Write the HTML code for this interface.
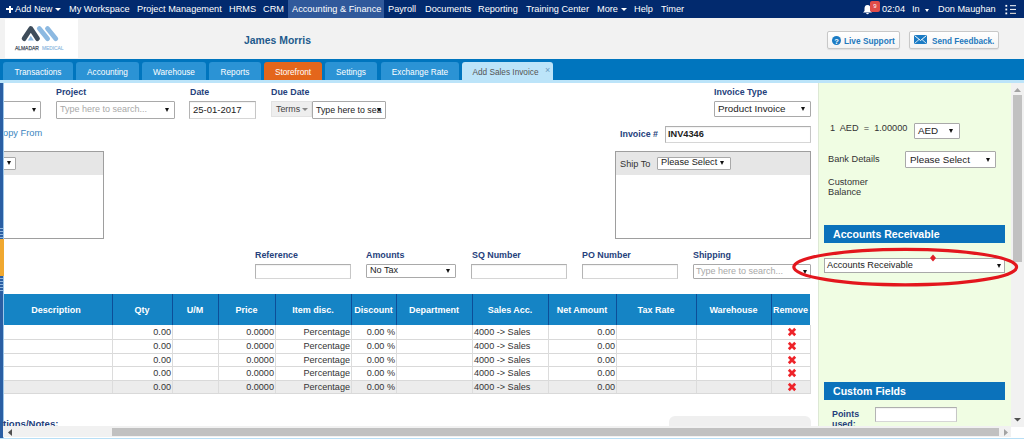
<!DOCTYPE html>
<html><head><meta charset="utf-8">
<style>
*{box-sizing:border-box;margin:0;padding:0}
html,body{width:1024px;height:439px;overflow:hidden;background:#fff;font-family:"Liberation Sans",sans-serif;font-size:9.2px;color:#222;position:relative}
.a{position:absolute;white-space:nowrap}
#nav{position:absolute;left:0;top:0;width:1024px;height:18px;background:#022a6e;color:#fff;font-size:9.2px}
#nav .t{position:absolute;top:4px;line-height:11px;white-space:nowrap}
#hdr{position:absolute;left:0;top:18px;width:1024px;height:41px;background:#f2f2f2}
#logo{position:absolute;left:5px;top:1px;width:73px;height:39px;background:#fff}
#tabbar{position:absolute;left:0;top:59px;width:1024px;height:24px;background:#0075be}
.tab{position:absolute;top:3px;height:18px;background:#2b93d5;color:#fff;font-size:8.25px;text-align:center;line-height:18px;padding-top:1.5px;border-radius:3px 3px 0 0}
#tabline{position:absolute;left:0;top:80px;width:1024px;height:3px;background:#bce4f9}
.lbl{position:absolute;font-weight:bold;color:#253f7c;font-size:8.9px;white-space:nowrap;line-height:10px;margin-top:-1px}
.inp{position:absolute;background:#fff;border:1px solid;border-color:#aeaeae #c6c6c6 #d6d6d6 #b4b4b4;box-shadow:inset 0 1px 1px rgba(0,0,0,.05)}
.sel{position:absolute;background:#fff;border:1px solid #a9a9a9;border-radius:1px;font-size:9.5px;color:#222;white-space:nowrap;overflow:hidden}
.tri{position:absolute;width:0;height:0;margin-left:-0.3px;border-top:4.3px solid #111;border-left:2.9px solid transparent;border-right:2.9px solid transparent}
.ph{color:#a8a8a8;font-size:9px}
#green{position:absolute;left:818px;top:83px;width:193px;height:344px;background:#f0fde3;border-left:1px solid #dde8d5}
.gh{position:absolute;background:#0b72bb;color:#fff;font-weight:bold;font-size:10.6px;line-height:18px;white-space:nowrap}
.gt{position:absolute;font-size:9.2px;color:#333;white-space:nowrap;line-height:10px}
.th{position:absolute;top:305px;color:#fff;font-weight:bold;font-size:9px;text-align:center;line-height:10px;white-space:nowrap}
.td{position:absolute;color:#333;font-size:9.1px;line-height:10px;white-space:nowrap}
</style></head><body>
<div id="nav">
  <span class="a" style="left:6px;top:8px;width:7px;height:2px;background:#fff"></span><span class="a" style="left:8.5px;top:5.5px;width:2px;height:7px;background:#fff"></span>
  <span class="t" style="left:15px">Add New</span>
  <span class="a" style="left:55px;top:8px;width:0;height:0;border-top:3px solid #fff;border-left:3px solid transparent;border-right:3px solid transparent"></span>
  <span class="t" style="left:69px">My Workspace</span>
  <span class="t" style="left:137px">Project Management</span>
  <span class="t" style="left:229px">HRMS</span>
  <span class="t" style="left:263px">CRM</span>
  <div class="a" style="left:288px;top:0;width:96px;height:18px;background:#30599b"></div>
  <span class="t" style="left:292px">Accounting &amp; Finance</span>
  <span class="t" style="left:388px">Payroll</span>
  <span class="t" style="left:425px">Documents</span>
  <span class="t" style="left:478px">Reporting</span>
  <span class="t" style="left:526px">Training Center</span>
  <span class="t" style="left:597px">More</span>
  <span class="a" style="left:621px;top:8px;width:0;height:0;border-top:3px solid #fff;border-left:3px solid transparent;border-right:3px solid transparent"></span>
  <span class="t" style="left:634px">Help</span>
  <span class="t" style="left:661px">Timer</span>
  <span class="t" style="left:882px">02:04</span>
  <span class="t" style="left:912px">In</span>
  <span class="a" style="left:925px;top:9px;width:0;height:0;border-top:3px solid #fff;border-left:2.5px solid transparent;border-right:2.5px solid transparent"></span>
  <span class="t" style="left:938px">Don Maughan</span>
</div>
<div id="hdr">
  <div id="logo"></div>
  <div class="a" style="left:244px;top:17px;font-size:10.4px;font-weight:bold;color:#1e5a8c;line-height:12px">James Morris</div>
  <div class="a" style="left:827px;top:13px;width:73px;height:18px;background:linear-gradient(#fff,#f3f3f3);border:1px solid #c8c8c8;border-radius:2px;box-shadow:0 1px 1px rgba(0,0,0,.08)"></div>
  <div class="a" style="left:909px;top:13px;width:90px;height:18px;background:linear-gradient(#fff,#f3f3f3);border:1px solid #c8c8c8;border-radius:2px;box-shadow:0 1px 1px rgba(0,0,0,.08)"></div>
  <div class="a" style="left:844px;top:18px;font-size:8.3px;font-weight:bold;color:#2479bd;line-height:11px">Live Support</div>
  <div class="a" style="left:932px;top:18px;font-size:8.2px;font-weight:bold;color:#2479bd;line-height:11px">Send Feedback.</div>
</div>
<div id="tabbar">
  <div class="tab" style="left:3px;width:70px">Transactions</div>
  <div class="tab" style="left:76px;width:63px">Accounting</div>
  <div class="tab" style="left:142px;width:64px">Warehouse</div>
  <div class="tab" style="left:209px;width:52px">Reports</div>
  <div class="tab" style="left:264px;width:58px;background:#e4661b">Storefront</div>
  <div class="tab" style="left:325px;width:52px">Settings</div>
  <div class="tab" style="left:381px;width:78px">Exchange Rate</div>
  <div class="tab" style="left:462px;width:91px;background:#bce4f9;color:#555;height:21px;padding-right:4px">Add Sales Invoice</div>
</div>
<div id="tabline"></div>


<!-- top form row -->
<div class="sel" style="left:0;top:101px;width:41px;height:18px"></div>
<div class="lbl" style="left:56px;top:88px">Project</div>
<div class="sel" style="left:56px;top:101px;width:119px;height:18px"><span class="ph" style="position:absolute;left:3px;top:1.5px">Type here to search...</span></div>
<div class="lbl" style="left:190px;top:88px">Date</div>
<div class="inp" style="left:189px;top:101px;width:67px;height:18px"><span style="position:absolute;left:3px;top:1.5px;font-size:9.5px">25-01-2017</span></div>
<div class="lbl" style="left:271px;top:88px">Due Date</div>
<div class="a" style="left:271px;top:101px;width:41px;height:16px;background:#eee;border:1px solid #e2e2e2;color:#444;font-size:8.9px;line-height:14px;padding-left:4px">Terms</div>
<div class="sel" style="left:312px;top:101px;width:74px;height:17.5px"><span style="position:absolute;left:3px;top:2.5px;font-size:8.8px">Type here to sea</span></div>
<div class="lbl" style="left:714px;top:88px">Invoice Type</div>
<div class="sel" style="left:714px;top:101px;width:97px;height:16px"><span style="position:absolute;left:3px;top:1px;font-size:9.8px">Product Invoice</span></div>
<div class="a" style="left:3px;top:128px;color:#3a85c0;font-size:9.3px">opy From</div>
<div class="lbl" style="left:620px;top:129.5px">Invoice #</div>
<div class="inp" style="left:665px;top:126px;width:146px;height:17px"><span style="position:absolute;left:2px;top:2px;font-weight:bold;font-size:9.2px;color:#222">INV4346</span></div>

<!-- boxes -->
<div class="a" style="left:-2px;top:151px;width:106px;height:88px;border:1px solid #9e9e9e;background:#fff">
  <div style="position:absolute;left:0;top:0;width:104px;height:23px;background:#e6e6e6"></div>
  <div class="sel" style="left:0;top:5px;width:17px;height:13px"></div>
</div>
<div class="a" style="left:615px;top:151px;width:196px;height:88px;border:1px solid #9e9e9e;background:#fff">
  <div style="position:absolute;left:0;top:0;width:194px;height:23px;background:#e6e6e6"></div>
  <div class="gt" style="left:4px;top:7px">Ship To</div>
  <div class="sel" style="left:41px;top:4.5px;width:74px;height:13.5px"><span style="position:absolute;left:3px;top:-0.5px;font-size:9.2px">Please Select</span></div>
</div>

<!-- second row -->
<div class="lbl" style="left:255px;top:251px">Reference</div>
<div class="inp" style="left:255px;top:264px;width:96px;height:15px"></div>
<div class="lbl" style="left:366px;top:251px">Amounts</div>
<div class="sel" style="left:366px;top:264px;width:90px;height:14px"><span style="position:absolute;left:3px;top:0px;font-size:9.1px">No Tax</span></div>
<div class="lbl" style="left:472px;top:251px">SQ Number</div>
<div class="inp" style="left:471px;top:264px;width:96px;height:15px"></div>
<div class="lbl" style="left:582px;top:251px">PO Number</div>
<div class="inp" style="left:582px;top:264px;width:96px;height:15px"></div>
<div class="lbl" style="left:693px;top:251px">Shipping</div>
<div class="sel" style="left:693px;top:264px;width:118px;height:15px"><span class="ph" style="position:absolute;left:2px;top:0.5px">Type here to search...</span></div>

<!-- table -->
<div id="tbl">
<div class="a" style="left:0;top:294px;width:810px;height:31px;background:#1584c5"></div>
<div class="a" style="left:112px;top:294px;width:1px;height:31px;background:#0d4e98"></div>
<div class="a" style="left:172px;top:294px;width:1px;height:31px;background:#0d4e98"></div>
<div class="a" style="left:218px;top:294px;width:1px;height:31px;background:#0d4e98"></div>
<div class="a" style="left:275px;top:294px;width:1px;height:31px;background:#0d4e98"></div>
<div class="a" style="left:351px;top:294px;width:1px;height:31px;background:#0d4e98"></div>
<div class="a" style="left:396px;top:294px;width:1px;height:31px;background:#0d4e98"></div>
<div class="a" style="left:472px;top:294px;width:1px;height:31px;background:#0d4e98"></div>
<div class="a" style="left:548px;top:294px;width:1px;height:31px;background:#0d4e98"></div>
<div class="a" style="left:616px;top:294px;width:1px;height:31px;background:#0d4e98"></div>
<div class="a" style="left:696px;top:294px;width:1px;height:31px;background:#0d4e98"></div>
<div class="a" style="left:771px;top:294px;width:1px;height:31px;background:#0d4e98"></div>
<div class="th" style="left:0px;width:112px">Description</div>
<div class="th" style="left:112px;width:60px">Qty</div>
<div class="th" style="left:172px;width:46px">U/M</div>
<div class="th" style="left:218px;width:57px">Price</div>
<div class="th" style="left:275px;width:76px">Item disc.</div>
<div class="th" style="left:351px;width:45px">Discount</div>
<div class="th" style="left:396px;width:76px">Department</div>
<div class="th" style="left:472px;width:76px">Sales Acc.</div>
<div class="th" style="left:548px;width:68px">Net Amount</div>
<div class="th" style="left:616px;width:80px">Tax Rate</div>
<div class="th" style="left:696px;width:75px">Warehouse</div>
<div class="th" style="left:771px;width:39px">Remove</div>
<div class="a" style="left:0;top:380px;width:810px;height:13px;background:#ececec"></div>
<div class="a" style="left:0;top:339px;width:811px;height:1px;background:#d9d9d9"></div>
<div class="a" style="left:0;top:353px;width:811px;height:1px;background:#d9d9d9"></div>
<div class="a" style="left:0;top:366px;width:811px;height:1px;background:#d9d9d9"></div>
<div class="a" style="left:0;top:380px;width:811px;height:1px;background:#d9d9d9"></div>
<div class="a" style="left:0;top:393px;width:811px;height:1px;background:#d9d9d9"></div>
<div class="a" style="left:112px;top:325px;width:1px;height:68px;background:#dcdcdc"></div>
<div class="a" style="left:172px;top:325px;width:1px;height:68px;background:#dcdcdc"></div>
<div class="a" style="left:218px;top:325px;width:1px;height:68px;background:#dcdcdc"></div>
<div class="a" style="left:275px;top:325px;width:1px;height:68px;background:#dcdcdc"></div>
<div class="a" style="left:351px;top:325px;width:1px;height:68px;background:#dcdcdc"></div>
<div class="a" style="left:396px;top:325px;width:1px;height:68px;background:#dcdcdc"></div>
<div class="a" style="left:472px;top:325px;width:1px;height:68px;background:#dcdcdc"></div>
<div class="a" style="left:548px;top:325px;width:1px;height:68px;background:#dcdcdc"></div>
<div class="a" style="left:616px;top:325px;width:1px;height:68px;background:#dcdcdc"></div>
<div class="a" style="left:696px;top:325px;width:1px;height:68px;background:#dcdcdc"></div>
<div class="a" style="left:771px;top:325px;width:1px;height:68px;background:#dcdcdc"></div>
<div class="a" style="left:810px;top:325px;width:1px;height:68px;background:#dcdcdc"></div>
<div class="td" style="left:91px;top:327px;width:80px;text-align:right">0.00</div>
<div class="td" style="left:194px;top:327px;width:80px;text-align:right">0.0000</div>
<div class="td" style="left:270px;top:327px;width:80px;text-align:right">Percentage</div>
<div class="td" style="left:315px;top:327px;width:80px;text-align:right">0.00 %</div>
<div class="td" style="left:535px;top:327px;width:80px;text-align:right">0.00</div>
<div class="td" style="left:474px;top:327px">4000 -&gt; Sales</div>
<svg class="a" style="left:786.5px;top:326.5px" width="10" height="10" viewBox="0 0 10 10"><path d="M1.8 1.8L8.2 8.2M8.2 1.8L1.8 8.2" stroke="#ee2329" stroke-width="2.7"/></svg>
<div class="td" style="left:91px;top:341px;width:80px;text-align:right">0.00</div>
<div class="td" style="left:194px;top:341px;width:80px;text-align:right">0.0000</div>
<div class="td" style="left:270px;top:341px;width:80px;text-align:right">Percentage</div>
<div class="td" style="left:315px;top:341px;width:80px;text-align:right">0.00 %</div>
<div class="td" style="left:535px;top:341px;width:80px;text-align:right">0.00</div>
<div class="td" style="left:474px;top:341px">4000 -&gt; Sales</div>
<svg class="a" style="left:786.5px;top:340.5px" width="10" height="10" viewBox="0 0 10 10"><path d="M1.8 1.8L8.2 8.2M8.2 1.8L1.8 8.2" stroke="#ee2329" stroke-width="2.7"/></svg>
<div class="td" style="left:91px;top:355px;width:80px;text-align:right">0.00</div>
<div class="td" style="left:194px;top:355px;width:80px;text-align:right">0.0000</div>
<div class="td" style="left:270px;top:355px;width:80px;text-align:right">Percentage</div>
<div class="td" style="left:315px;top:355px;width:80px;text-align:right">0.00 %</div>
<div class="td" style="left:535px;top:355px;width:80px;text-align:right">0.00</div>
<div class="td" style="left:474px;top:355px">4000 -&gt; Sales</div>
<svg class="a" style="left:786.5px;top:354.5px" width="10" height="10" viewBox="0 0 10 10"><path d="M1.8 1.8L8.2 8.2M8.2 1.8L1.8 8.2" stroke="#ee2329" stroke-width="2.7"/></svg>
<div class="td" style="left:91px;top:368px;width:80px;text-align:right">0.00</div>
<div class="td" style="left:194px;top:368px;width:80px;text-align:right">0.0000</div>
<div class="td" style="left:270px;top:368px;width:80px;text-align:right">Percentage</div>
<div class="td" style="left:315px;top:368px;width:80px;text-align:right">0.00 %</div>
<div class="td" style="left:535px;top:368px;width:80px;text-align:right">0.00</div>
<div class="td" style="left:474px;top:368px">4000 -&gt; Sales</div>
<svg class="a" style="left:786.5px;top:367.5px" width="10" height="10" viewBox="0 0 10 10"><path d="M1.8 1.8L8.2 8.2M8.2 1.8L1.8 8.2" stroke="#ee2329" stroke-width="2.7"/></svg>
<div class="td" style="left:91px;top:382px;width:80px;text-align:right">0.00</div>
<div class="td" style="left:194px;top:382px;width:80px;text-align:right">0.0000</div>
<div class="td" style="left:270px;top:382px;width:80px;text-align:right">Percentage</div>
<div class="td" style="left:315px;top:382px;width:80px;text-align:right">0.00 %</div>
<div class="td" style="left:535px;top:382px;width:80px;text-align:right">0.00</div>
<div class="td" style="left:474px;top:382px">4000 -&gt; Sales</div>
<svg class="a" style="left:786.5px;top:381.5px" width="10" height="10" viewBox="0 0 10 10"><path d="M1.8 1.8L8.2 8.2M8.2 1.8L1.8 8.2" stroke="#ee2329" stroke-width="2.7"/></svg>

</div>

<!-- green panel -->
<div id="green"></div>
<div class="gt" style="left:830px;top:123px">1&nbsp; AED&nbsp; =&nbsp; 1.00000</div>
<div class="sel" style="left:914px;top:123px;width:46px;height:16px"><span style="position:absolute;left:3px;top:0.5px;font-size:9.8px">AED</span></div>
<div class="gt" style="left:828px;top:154px">Bank Details</div>
<div class="sel" style="left:905px;top:151px;width:91px;height:17px"><span style="position:absolute;left:4px;top:1.5px;font-size:9.8px">Please Select</span></div>
<div class="gt" style="left:828px;top:177px">Customer</div>
<div class="gt" style="left:828px;top:187px">Balance</div>
<div class="gh" style="left:824px;top:225px;width:181px;padding-left:9px">Accounts Receivable</div>
<div class="sel" style="left:824px;top:258px;width:181px;height:15px;border-radius:0"><span style="position:absolute;left:2px;top:1px;font-size:9.2px">Accounts Receivable</span></div>
<div class="gh" style="left:824px;top:382px;width:181px;padding-left:9px">Custom Fields</div>
<div class="lbl" style="left:832px;top:409.5px">Points</div>
<div class="lbl" style="left:832px;top:420px">used:</div>
<div class="inp" style="left:875px;top:407px;width:82px;height:15px"></div>


<!-- left bar -->
<div class="a" style="left:0;top:83px;width:3px;height:356px;background:#2a5ea3"></div>
<div class="a" style="left:3px;top:83px;width:1px;height:356px;background:#9cc7ea"></div>
<div class="a" style="left:0;top:226px;width:3px;height:13px;background:repeating-linear-gradient(#2a5ea3 0 2px,#8fb4dc 2px 3px)"></div>
<div class="a" style="left:0;top:239px;width:4px;height:37px;background:#f0a830"></div>
<div class="a" style="left:0;top:276px;width:3px;height:17px;background:repeating-linear-gradient(#2a5ea3 0 2px,#8fb4dc 2px 3px)"></div>
<div class="a" style="left:3px;top:417.5px;color:#253f7c;font-weight:bold;font-size:9.6px;line-height:12px">tions/Notes:</div>
<div class="a" style="left:669px;top:416px;width:142px;height:14px;background:#efefef;border-radius:6px 6px 0 0"></div>
<!-- scrollbars -->
<div class="a" style="left:1011px;top:83px;width:13px;height:344px;background:#f1f1f1"></div>
<div class="a" style="left:1013px;top:95px;width:9px;height:167px;background:#c1c1c1"></div>
<div class="a" style="left:3px;top:426px;width:1008px;height:11px;background:#f1f1f1"></div>
<div class="a" style="left:112px;top:428px;width:887px;height:8px;background:#c1c1c1"></div>
<div class="a" style="left:0;top:437.5px;width:1024px;height:1.5px;background:#b8dff6"></div>
<!-- icons -->
<svg class="a" style="left:5px;top:19px" width="73" height="39" viewBox="0 0 73 39">
<rect width="73" height="39" fill="#fff"/>
<path d="M25.8 21.5 L28.8 21.5 L25.8 16.8 L22.8 21.5 Z" fill="#8db9e0"/>
<path d="M19.1 19.6 L25.8 9.5 L32.5 19.6" fill="none" stroke="#3e4c5a" stroke-width="4.8" stroke-linecap="round" stroke-linejoin="round"/>
<path d="M34.3 9.6 L42.6 19.7 M42.5 9.6 L50.8 19.7" fill="none" stroke="#8cb9e1" stroke-width="4.8" stroke-linecap="round"/>
<text x="9.9" y="30.8" font-family="Liberation Sans" font-size="6.2" fill="#3e4c5a" stroke="#3e4c5a" stroke-width="0.25" textLength="24" lengthAdjust="spacingAndGlyphs">ALMADAR</text>
<text x="37" y="30.8" font-family="Liberation Sans" font-size="6.2" fill="#8fbbe2" stroke="#8fbbe2" stroke-width="0.2" textLength="21.5" lengthAdjust="spacingAndGlyphs">MEDICAL</text>
</svg>
<!-- bell -->
<svg class="a" style="left:862px;top:4px" width="11" height="11" viewBox="0 0 11 11"><path d="M5.5 1 C3 1 2.5 3 2.5 5 L2.5 7 L1 8.5 L10 8.5 L8.5 7 L8.5 5 C8.5 3 8 1 5.5 1Z M4.2 9 A1.3 1.3 0 0 0 6.8 9Z" fill="#fff"/></svg>
<div class="a" style="left:870px;top:1px;width:10px;height:11px;background:#e14c48;border-radius:2px;color:#fff;font-size:6px;line-height:10px;text-align:center">9</div>
<!-- menu icon -->
<svg class="a" style="left:1005px;top:4px" width="12" height="11" viewBox="0 0 12 11"><g fill="#fff"><rect x="0.4" y="0.9" width="1.8" height="1.8"/><rect x="0.4" y="4.6" width="1.8" height="1.8"/><rect x="0.4" y="8.5" width="1.8" height="1.8"/><rect x="5" y="1.2" width="6" height="1"/><rect x="5" y="4.9" width="6" height="1"/><rect x="5" y="8.8" width="6" height="1.2" fill="#ccc"/></g></svg>
<!-- question -->
<svg class="a" style="left:832px;top:36px" width="9" height="9" viewBox="0 0 9 9"><circle cx="4.5" cy="4.5" r="4.5" fill="#1b7bc4"/><text x="4.5" y="7.6" font-family="Liberation Sans" font-weight="bold" font-size="7.5" fill="#fff" text-anchor="middle">?</text></svg>
<!-- envelope -->
<svg class="a" style="left:914px;top:34px" width="14" height="12" viewBox="0 0 14 12"><rect x="0" y="1" width="13" height="9" fill="#1b7bc4"/><path d="M0.5 1.5 L6.5 6.5 L12.5 1.5" fill="none" stroke="#fff" stroke-width="1"/><path d="M0.5 9.5 L5 5.5 M12.5 9.5 L8 5.5" stroke="#fff" stroke-width="0.8"/></svg>
<!-- tab close -->
<div class="a" style="left:545px;top:65.5px;color:#6a9ac0;font-size:9px;line-height:9px">×</div>
<!-- select arrows main form -->
<span class="a" style="left:302px;top:108px;width:0;height:0;border-top:3px solid #888;border-left:3px solid transparent;border-right:3px solid transparent"></span>
<!-- arrows -->
<span class="tri" style="left:31.8px;top:108px"></span>
<span class="tri" style="left:165.2px;top:107.5px"></span>
<span class="tri" style="left:377px;top:107.5px"></span>
<span class="tri" style="left:801.6px;top:106.5px"></span>
<span class="tri" style="left:7.5px;top:161px"></span>
<span class="tri" style="left:720.5px;top:160.5px"></span>
<span class="tri" style="left:446px;top:268.5px"></span>
<span class="tri" style="left:803px;top:270px"></span>
<span class="tri" style="left:949.4px;top:128.5px"></span>
<span class="tri" style="left:986.2px;top:157.5px"></span>
<span class="tri" style="left:996.8px;top:264px"></span>
<!-- ellipse -->
<svg class="a" style="left:788px;top:244px" width="236" height="46" viewBox="0 0 236 46"><ellipse cx="117.2" cy="23.1" rx="111.4" ry="17.8" fill="none" stroke="#e3161d" stroke-width="3.2"/></svg>
<svg class="a" style="left:929px;top:254px" width="8" height="8" viewBox="0 0 8 8"><path d="M4 0.5L7 4L4 7.5L1 4Z" fill="#e01e25"/></svg>
<!-- scrollbar arrows -->
<svg class="a" style="left:1013px;top:87px" width="9" height="6" viewBox="0 0 9 6"><path d="M1 5L4.5 1L8 5Z" fill="#a3a3a3"/></svg>
<svg class="a" style="left:1013px;top:417px" width="9" height="6" viewBox="0 0 9 6"><path d="M1 1L4.5 4.5L8 1Z" fill="#505050"/></svg>
<svg class="a" style="left:7px;top:428px" width="6" height="9" viewBox="0 0 6 9"><path d="M5 1L1 4.5L5 8Z" fill="#505050"/></svg>
<svg class="a" style="left:1003px;top:428px" width="6" height="9" viewBox="0 0 6 9"><path d="M1 1L5 4.5L1 8Z" fill="#a3a3a3"/></svg>
</body></html>
